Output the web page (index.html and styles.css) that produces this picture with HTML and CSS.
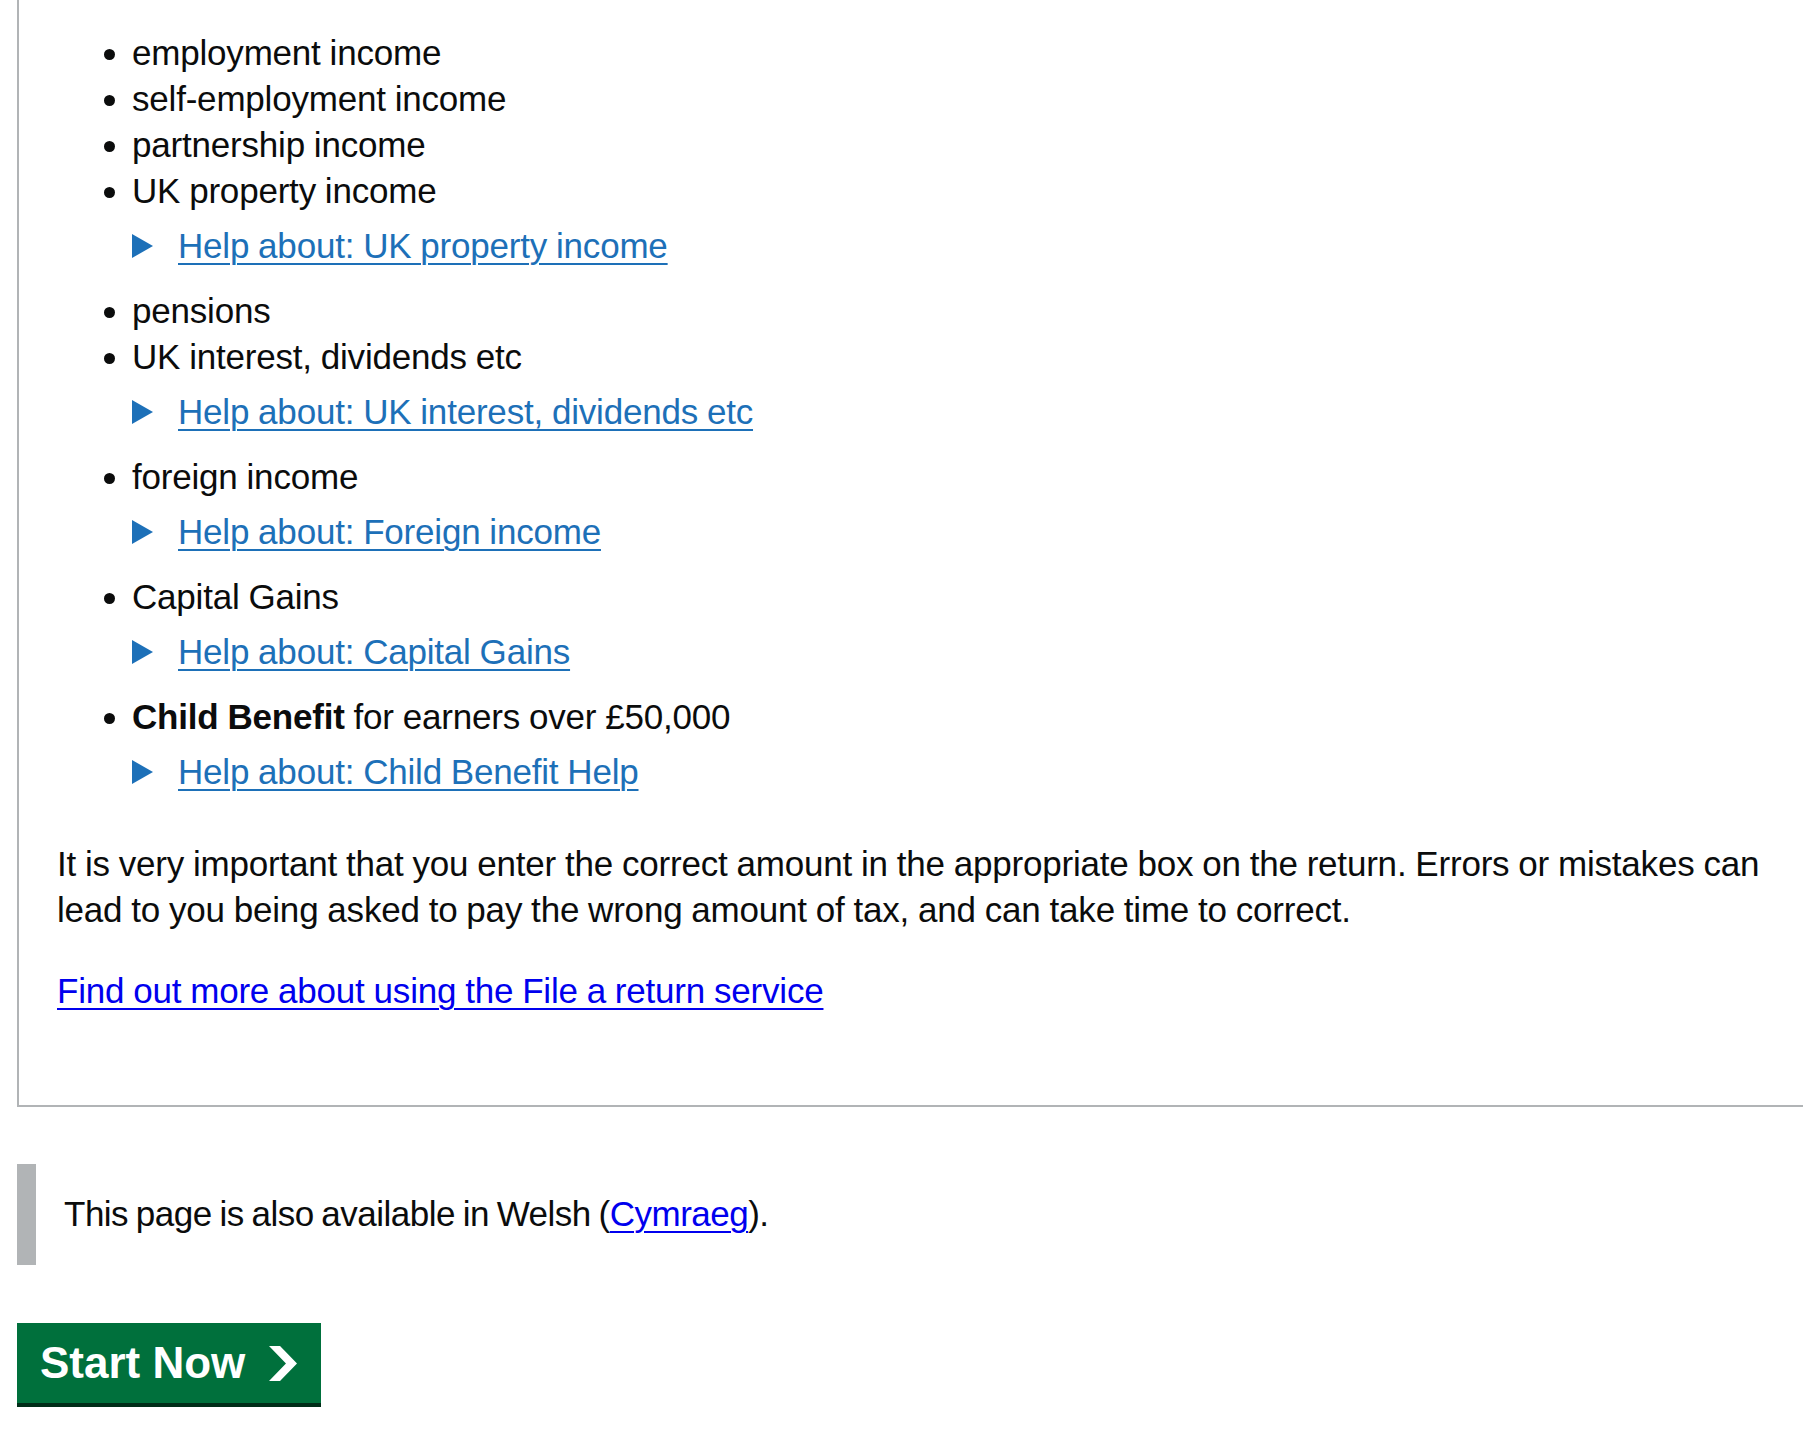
FILE: index.html
```html
<!DOCTYPE html>
<html lang="en">
<head>
    <meta charset="UTF-8">
    <meta name="viewport" content="width=device-width, initial-scale=1.0">
    <title>File a return</title>
    <link rel="stylesheet" href="styles.css">
</head>
<body>

    <div class="panel">
        <ul class="income-list">
            <li>employment income</li>
            <li>self-employment income</li>
            <li>partnership income</li>
            <li>UK property income
                <div class="help"><span class="help-arrow"></span><a href="#">Help about: UK property income</a></div>
            </li>
            <li>pensions</li>
            <li>UK interest, dividends etc
                <div class="help"><span class="help-arrow"></span><a href="#">Help about: UK interest, dividends etc</a></div>
            </li>
            <li>foreign income
                <div class="help"><span class="help-arrow"></span><a href="#">Help about: Foreign income</a></div>
            </li>
            <li>Capital Gains
                <div class="help"><span class="help-arrow"></span><a href="#">Help about: Capital Gains</a></div>
            </li>
            <li><strong>Child Benefit</strong> for earners over £50,000
                <div class="help"><span class="help-arrow"></span><a href="#">Help about: Child Benefit Help</a></div>
            </li>
        </ul>

        <p class="important">It is very important that you enter the correct amount in the appropriate box on the return. Errors or mistakes can lead to you being asked to pay the wrong amount of tax, and can take time to correct.</p>

        <p class="more"><a href="#">Find out more about using the File a return service</a></p>
    </div>

    <div class="inset">
        This page is also available in Welsh (<a href="#">Cymraeg</a>).
    </div>

    <a class="start-btn" href="#">Start Now
        <svg class="start-icon" viewBox="0 0 33 40" preserveAspectRatio="none" aria-hidden="true"><path fill="currentColor" d="M0 0h13l20 20-20 20H0l20-20z"/></svg>
    </a>

</body>
</html>
```

FILE: styles.css
```css
body {
    margin: 0;
    padding: 0 0 40px 17px;
    font-family: "Liberation Sans", Arial, sans-serif;
    font-size: 35px;
    line-height: 46px;
    letter-spacing: -0.2px;
    word-spacing: -0.6px;
    color: #0b0c0c;
    background: #fff;
}
a { color: #0000ee; text-decoration-thickness: 2px; text-underline-offset: 5px; }

.panel {
    border-left: 2px solid #b1b4b6;
    border-bottom: 2px solid #b1b4b6;
    padding: 30px 0 91px 38px;
}
.income-list { margin: 0; padding-left: 75px; }
.income-list li { margin: 0; }

.help {
    display: flex;
    align-items: center;
    margin: 9px 0 19px -75px;
    padding-left: 75px;
}
.help-arrow {
    width: 0; height: 0;
    border-style: solid;
    border-width: 12px 0 12px 21px;
    border-color: transparent transparent transparent #1d70b8;
    margin-right: 25px;
}
.help a { color: #1d70b8; }

.important { margin: 46px 0 0; }
.more { margin: 35px 0 0; }

.inset {
    margin-top: 57px;
    border-left: 19px solid #b1b4b6;
    padding: 27px 0 28px 28px;
    letter-spacing: -0.5px;
    word-spacing: -1.5px;
}

.start-btn {
    display: inline-flex;
    align-items: center;
    margin-top: 58px;
    height: 80px;
    padding: 0 24px 0 23px;
    background: #00703c;
    color: #fff;
    font-weight: bold;
    font-size: 44px;
    letter-spacing: 0;
    word-spacing: 0;
    text-decoration: none;
    box-shadow: 0 4px 0 #002d18;
}
.start-icon { width: 28px; height: 35px; margin-left: 24px; }
```
